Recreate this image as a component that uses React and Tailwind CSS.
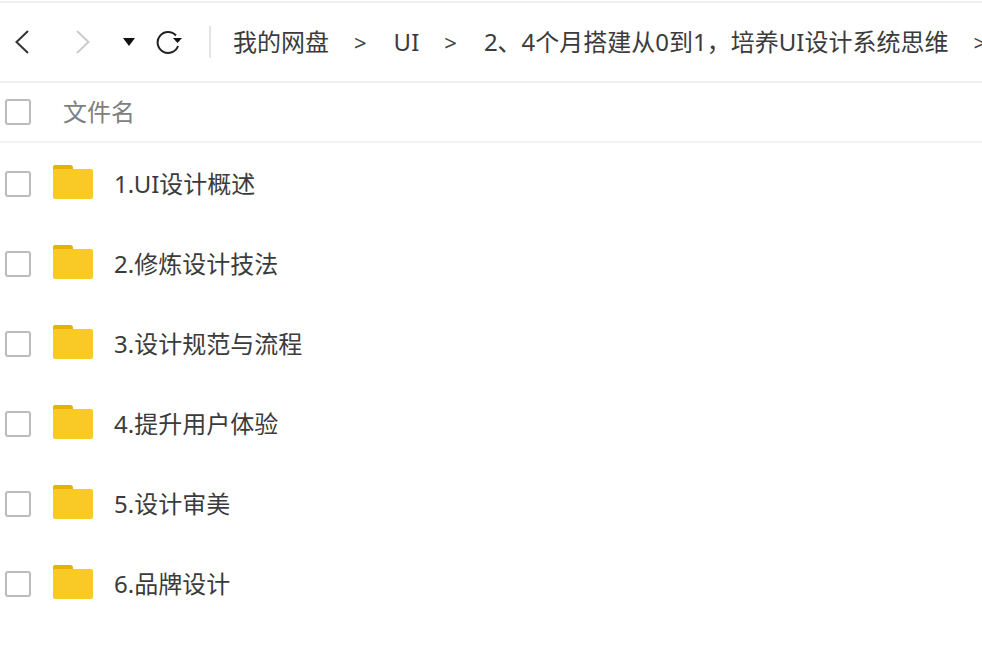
const folders = [
  '1.UI设计概述',
  '2.修炼设计技法',
  '3.设计规范与流程',
  '4.提升用户体验',
  '5.设计审美',
  '6.品牌设计',
];

const crumbs = ['UI', '2、4个月搭建从0到1，培养UI设计系统思维'];

const Checkbox = () => (
  <div className="w-[26px] h-[26px] shrink-0 rounded-[3px] border-2 border-[#bbbbbb] bg-white" />
);

const FolderIcon = () => (
  <svg width="40" height="34" viewBox="0 0 40 34" className="shrink-0 block">
    <path d="M0 2a2 2 0 0 1 2-2h15a3 3 0 0 1 3 3v3H0z" fill="#e8b100" />
    <path d="M0 6a2 2 0 0 1 2-2h36a2 2 0 0 1 2 2v26a2 2 0 0 1-2 2H2a2 2 0 0 1-2-2z" fill="#f9c926" />
  </svg>
);

const Sep = () => <span className="ml-[25px] mr-[27px] text-[#444] text-[22px]">&gt;</span>;

export default function App() {
  return (
    <div
      className="w-[982px] h-[662px] overflow-hidden bg-white pt-[1px]"
      style={{ fontFamily: '"Noto Sans", "Noto Sans CJK SC", sans-serif' }}
    >
      <div className="h-[82px] border-t-2 border-b-2 border-[#f0f0f0] flex items-center whitespace-nowrap">
        <div className="w-[209px] shrink-0 flex items-center pl-[14px]">
          <svg width="16" height="24" viewBox="0 0 16 24" fill="none" stroke="#333" strokeWidth="2">
            <path d="M14 1 2.5 12 14 23" />
          </svg>
          <svg width="16" height="24" viewBox="0 0 16 24" fill="none" stroke="#ccc" strokeWidth="2" className="ml-[45px]">
            <path d="M2 1l11.5 11L2 23" />
          </svg>
          <svg width="12" height="8" viewBox="0 0 12 8" className="ml-[32px]">
            <path d="M0 0h12L6 8z" fill="#111" />
          </svg>
          <svg width="28" height="26" viewBox="0 0 28 26" fill="none" className="ml-[20px]">
            <path d="M21 6.5A10.5 10.5 0 1 0 23 17" stroke="#222" strokeWidth="2" />
            <path d="M18 9h9l-4.5 5z" fill="#111" />
          </svg>
        </div>
        <div className="w-[2px] h-[32px] bg-[#e4e4e4] shrink-0" />
        <div className="ml-[22px] flex items-center text-[24px] leading-none text-[#3b3b3b]">
          <span>我的网盘</span>
          {crumbs.map((c) => (
            <span key={c} className="flex items-center">
              <Sep />
              <span>{c}</span>
            </span>
          ))}
          <Sep />
        </div>
      </div>
      <div className="h-[60px] border-b-2 border-[#f3f3f3] flex items-center pl-[5px]">
        <Checkbox />
        <span className="ml-[32px] text-[24px] leading-none text-[#808080]">文件名</span>
      </div>
      <div className="pt-[1px]">
        {folders.map((name) => (
          <div key={name} className="h-[80px] flex items-center pl-[5px]">
            <Checkbox />
            <div className="ml-[22px] mb-[4px]">
              <FolderIcon />
            </div>
            <span className="ml-[21px] text-[24px] leading-none text-[#3b3b3b] whitespace-nowrap">{name}</span>
          </div>
        ))}
      </div>
    </div>
  );
}
